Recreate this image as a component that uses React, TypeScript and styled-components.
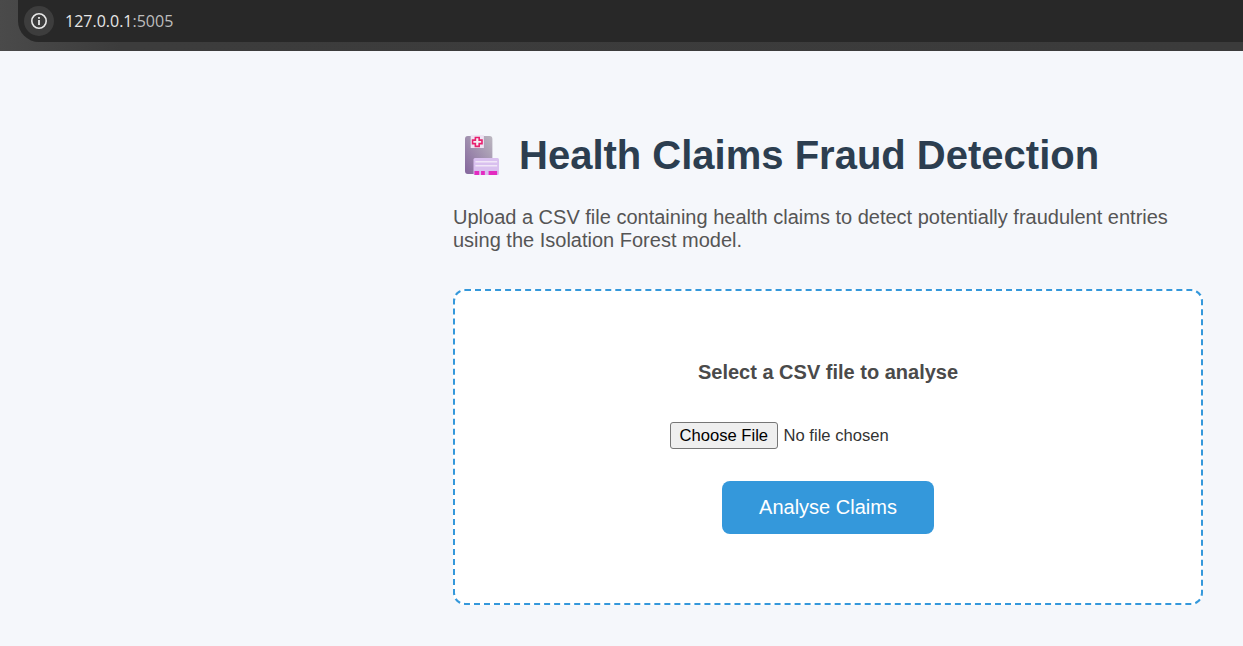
import React from "react";
import styled, { createGlobalStyle } from "styled-components";

const Global = createGlobalStyle`
  html, body { margin: 0; padding: 0; height: 100%; background: #f5f7fb; overflow: hidden; }
  body { font-family: "Liberation Sans", Arial, sans-serif; }
  * { box-sizing: border-box; }
`;

const Page = styled.div`
  width: 1243px;
  height: 646px;
  display: flex;
  flex-direction: column;
  background: #f5f7fb;
`;

const BrowserBar = styled.div`
  height: 51px;
  flex: none;
  padding-left: 18px;
  padding-bottom: 9px;
  display: flex;
  background: linear-gradient(90deg, #4a4a4a 0, #3c3c3c 120px, #3b3b3b 100%);
`;

const AddressPill = styled.div`
  flex: 1;
  display: flex;
  align-items: center;
  gap: 11px;
  padding-left: 6px;
  background: #282828;
  border-radius: 0 0 0 21px;
`;

const InfoBadge = styled.div`
  width: 30px;
  height: 30px;
  border-radius: 50%;
  background: #3d3d3d;
  display: flex;
  align-items: center;
  justify-content: center;
`;

const Url = styled.div`
  font-family: "Open Sans", "Noto Sans", sans-serif;
  font-size: 16px;
  color: #e6e6e6;
  span { color: #bdbdbd; }
`;

const Main = styled.main`
  margin-left: 453px;
  width: 750px;
  padding-top: 79px;
`;

const Title = styled.h1`
  margin: 0;
  display: flex;
  align-items: center;
  gap: 20px;
  height: 50px;
  padding-left: 12px;
  font-size: 40px;
  font-weight: 700;
  color: #2c3e50;
`;

const Lead = styled.p`
  margin: 26px 0 0;
  font-size: 20px;
  line-height: 23px;
  color: #555;
`;

const UploadZone = styled.form`
  margin-top: 37px;
  height: 316px;
  border: 2px dashed #3498db;
  border-radius: 12px;
  background: #fff;
  display: flex;
  flex-direction: column;
  align-items: center;
  padding-top: 70px;
`;

const ZoneLabel = styled.label`
  font-size: 20px;
  font-weight: 700;
  line-height: 23px;
  color: #4a4a4a;
`;

const FileInput = styled.input`
  margin-top: 38px;
  width: 316px;
  font-family: "Liberation Sans", Arial, sans-serif;
  font-size: 16.6px;
  color: #333;

  &::file-selector-button {
    height: 27px;
    padding: 0 8.5px;
    margin-right: 6px;
    border: 1px solid #767676;
    border-radius: 3px;
    background: #efefef;
    color: #000;
    font: inherit;
  }
`;

const SubmitButton = styled.button`
  margin-top: 32px;
  width: 212px;
  height: 53px;
  border: none;
  border-radius: 8px;
  background: #3498db;
  color: #fff;
  font-family: "Liberation Sans", Arial, sans-serif;
  font-size: 20px;
`;

const InfoIcon = () => (
  <svg width="18" height="18" viewBox="0 0 18 18" fill="none">
    <circle cx="9" cy="9" r="7.2" stroke="#e8e8e8" strokeWidth="1.6" />
    <rect x="8.1" y="8" width="1.8" height="5" fill="#e8e8e8" />
    <rect x="8.1" y="5" width="1.8" height="1.8" fill="#e8e8e8" />
  </svg>
);

const HospitalIcon = () => (
  <svg width="34" height="40" viewBox="0 0 36 40" preserveAspectRatio="none" style={{ flex: "none" }}>
    <defs>
      <linearGradient id="doc" x1="0" y1="1" x2="1" y2="0">
        <stop offset="0" stopColor="#83659c" />
        <stop offset="1" stopColor="#bcb8c0" />
      </linearGradient>
    </defs>
    <rect x="0" y="1" width="29" height="38" rx="3" fill="url(#doc)" />
    <rect x="6" y="0" width="14" height="13" fill="#efe4f3" />
    <path d="M11 2.5h4v2.6h3v3.6h-3v2.6h-4V8.7H8V5.1h3z" fill="#f4f0f6" stroke="#e8206e" strokeWidth="1.7" />
    <rect x="9" y="23" width="27" height="17" rx="1.5" fill="#d9c0ef" />
    <rect x="11" y="26" width="23" height="1.5" fill="#f1e6f8" />
    <rect x="11" y="30" width="23" height="1.5" fill="#f1e6f8" />
    <rect x="10" y="36" width="5" height="4" fill="#e32bc0" />
    <rect x="17" y="36" width="4" height="4" fill="#e32bc0" />
    <rect x="25" y="36" width="9" height="4" fill="#e32bc0" />
  </svg>
);

export default function App() {
  return (
    <Page>
      <Global />
      <BrowserBar>
        <AddressPill>
          <InfoBadge>
            <InfoIcon />
          </InfoBadge>
          <Url>
            127.0.0.1<span>:5005</span>
          </Url>
        </AddressPill>
      </BrowserBar>
      <Main>
        <Title>
          <HospitalIcon />
          Health Claims Fraud Detection
        </Title>
        <Lead>
          Upload a CSV file containing health claims to detect potentially fraudulent entries using the Isolation Forest model.
        </Lead>
        <UploadZone onSubmit={(e) => e.preventDefault()}>
          <ZoneLabel htmlFor="csv">Select a CSV file to analyse</ZoneLabel>
          <FileInput id="csv" type="file" accept=".csv" />
          <SubmitButton type="submit">Analyse Claims</SubmitButton>
        </UploadZone>
      </Main>
    </Page>
  );
}
